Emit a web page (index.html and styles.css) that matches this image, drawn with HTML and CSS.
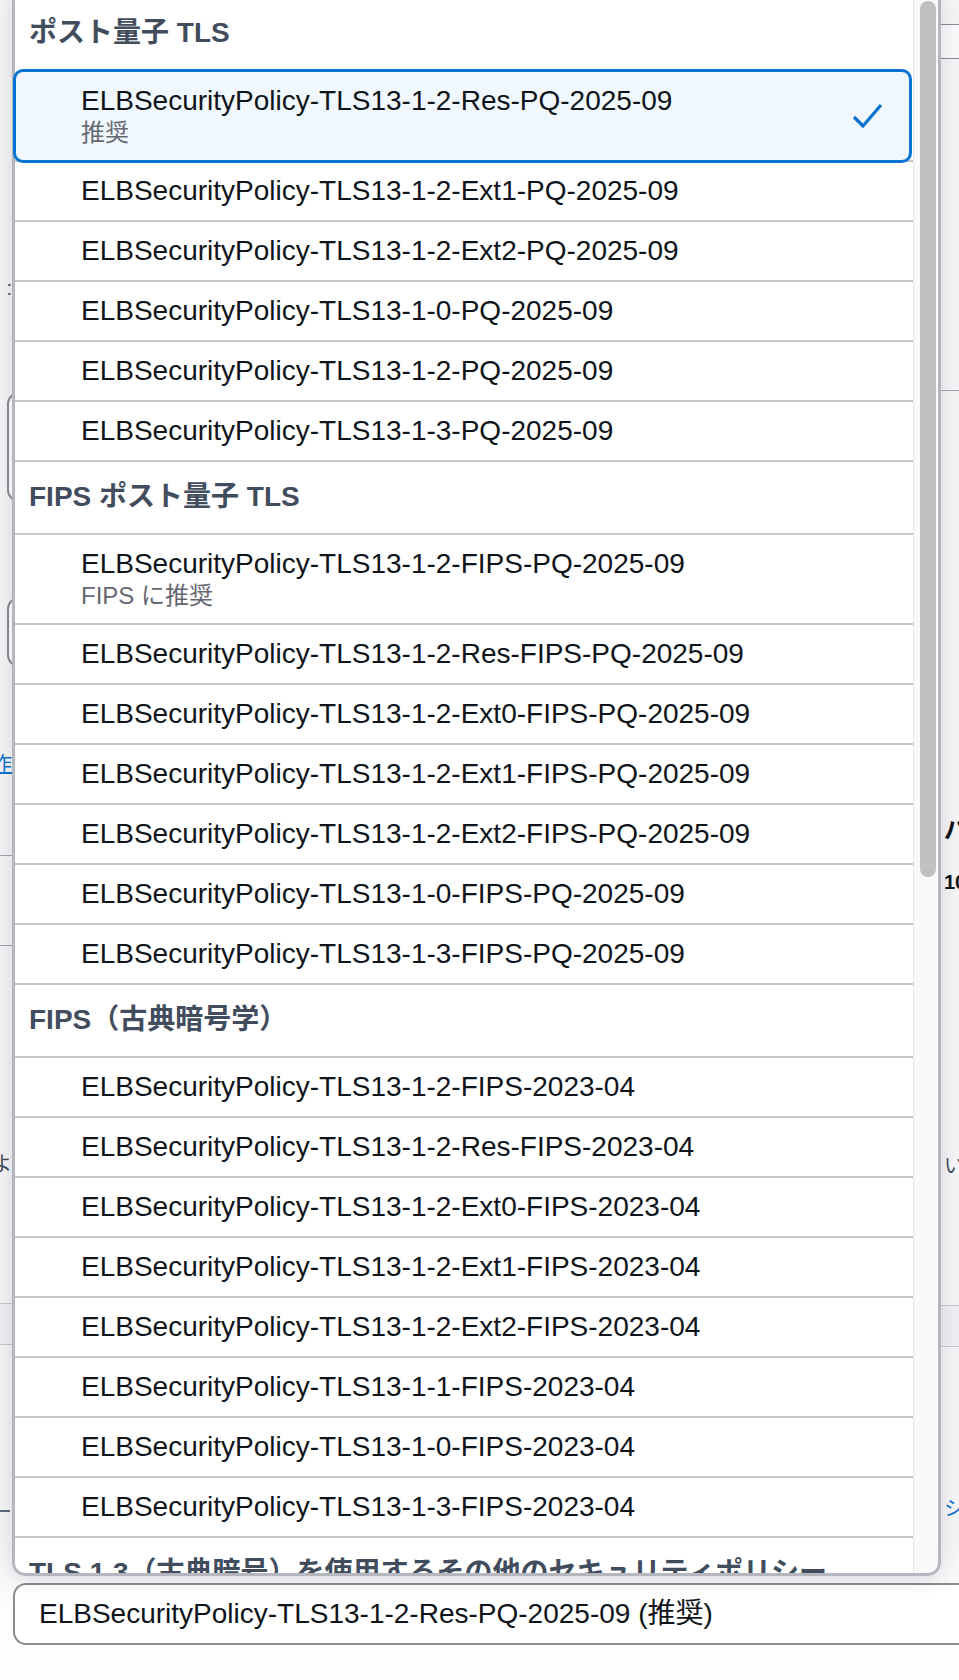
FILE: index.html
```html
<!DOCTYPE html>
<html lang="ja">
<head>
  <meta charset="UTF-8" />
  <meta name="viewport" content="width=device-width, initial-scale=1.0"/>
  <title>セキュリティポリシー</title>
  <link rel="stylesheet" href="styles.css">
</head>
<body>

  <!-- 背景のフォーム (ドロップダウンの下に隠れている部分) -->
  <div class="page">
    <div class="edge edge-left">
      <div class="frag colon">:</div>
      <div class="input-box tall"></div>
      <div class="input-box short"></div>
      <div class="frag link"><span>新規作</span></div>
      <div class="rule rule-a"></div>
      <div class="rule rule-b"></div>
      <div class="frag yo"><span>によ</span></div>
      <div class="band"></div>
      <div class="dash"></div>
    </div>
    <div class="middle"></div>
    <div class="edge edge-right">
      <div class="tab-strip"></div>
      <div class="rule rule-c"></div>
      <div class="frag pa">パラメータ</div>
      <div class="frag num">10</div>
      <div class="frag need">い要件</div>
      <div class="band band-r"></div>
      <div class="frag shi">シークレット</div>
    </div>
  </div>

  <div class="field">
    <div class="select-trigger">ELBSecurityPolicy-TLS13-1-2-Res-PQ-2025-09 (推奨)</div>
  </div>

  <!-- ドロップダウン -->
  <div class="dropdown">
    <div class="options">
      <div class="group-label first">ポスト量子 TLS</div>
      <div class="option selected">
        <div class="option-text">
          <span class="label">ELBSecurityPolicy-TLS13-1-2-Res-PQ-2025-09</span>
          <span class="desc">推奨</span>
        </div>
        <svg class="check" viewBox="0 0 32 28">
          <polyline points="3,15 12,24 30,3" fill="none" stroke="#0972d3" stroke-width="3.2" stroke-linejoin="round"/>
        </svg>
      </div>
      <div class="option">ELBSecurityPolicy-TLS13-1-2-Ext1-PQ-2025-09</div>
      <div class="option">ELBSecurityPolicy-TLS13-1-2-Ext2-PQ-2025-09</div>
      <div class="option">ELBSecurityPolicy-TLS13-1-0-PQ-2025-09</div>
      <div class="option">ELBSecurityPolicy-TLS13-1-2-PQ-2025-09</div>
      <div class="option">ELBSecurityPolicy-TLS13-1-3-PQ-2025-09</div>

      <div class="group-label">FIPS ポスト量子 TLS</div>
      <div class="option">
        <div class="option-text">
          <span class="label">ELBSecurityPolicy-TLS13-1-2-FIPS-PQ-2025-09</span>
          <span class="desc">FIPS に推奨</span>
        </div>
      </div>
      <div class="option">ELBSecurityPolicy-TLS13-1-2-Res-FIPS-PQ-2025-09</div>
      <div class="option">ELBSecurityPolicy-TLS13-1-2-Ext0-FIPS-PQ-2025-09</div>
      <div class="option">ELBSecurityPolicy-TLS13-1-2-Ext1-FIPS-PQ-2025-09</div>
      <div class="option">ELBSecurityPolicy-TLS13-1-2-Ext2-FIPS-PQ-2025-09</div>
      <div class="option">ELBSecurityPolicy-TLS13-1-0-FIPS-PQ-2025-09</div>
      <div class="option">ELBSecurityPolicy-TLS13-1-3-FIPS-PQ-2025-09</div>

      <div class="group-label">FIPS（古典暗号学）</div>
      <div class="option">ELBSecurityPolicy-TLS13-1-2-FIPS-2023-04</div>
      <div class="option">ELBSecurityPolicy-TLS13-1-2-Res-FIPS-2023-04</div>
      <div class="option">ELBSecurityPolicy-TLS13-1-2-Ext0-FIPS-2023-04</div>
      <div class="option">ELBSecurityPolicy-TLS13-1-2-Ext1-FIPS-2023-04</div>
      <div class="option">ELBSecurityPolicy-TLS13-1-2-Ext2-FIPS-2023-04</div>
      <div class="option">ELBSecurityPolicy-TLS13-1-1-FIPS-2023-04</div>
      <div class="option">ELBSecurityPolicy-TLS13-1-0-FIPS-2023-04</div>
      <div class="option">ELBSecurityPolicy-TLS13-1-3-FIPS-2023-04</div>

      <div class="group-label last">TLS 1.3（古典暗号）を使用するその他のセキュリティポリシー</div>
    </div>
    <div class="scrollbar"><div class="thumb"></div></div>
  </div>

</body>
</html>
```

FILE: styles.css
```css
* {
  box-sizing: border-box;
  margin: 0;
  padding: 0;
}

body {
  position: relative;
  height: 1680px;
  overflow: hidden;
  background: linear-gradient(to bottom, #f4f4f7 0, #f4f4f7 1540px, #fdfdfe 1610px);
  font-family: "Liberation Sans", "Noto Sans CJK JP", sans-serif;
  color: #0f141a;
}

/* 背景 */
.page {
  display: flex;
  height: 1578px;
}

.middle {
  flex: 1;
}

.edge {
  overflow: hidden;
  flex: none;
}

.edge-left {
  width: 12px;
}

.edge-right {
  width: 18px;
}

.frag {
  font-size: 20px;
  line-height: 24px;
  height: 24px;
  white-space: nowrap;
  color: #414d5c;
}

.edge-left .frag {
  display: flex;
  justify-content: flex-end;
}

.edge-right .frag {
  padding-left: 3px;
}

.colon {
  margin-top: 276px;
}

.input-box {
  margin-left: 7px;
  width: 80px;
  border: 2px solid #8c8c94;
  border-radius: 12px;
  background: #fff;
}

.input-box.tall {
  margin-top: 92px;
  height: 110px;
}

.input-box.short {
  margin-top: 95px;
  height: 70px;
}

.link {
  margin-top: 85px;
  color: #0972d3;
  text-decoration: underline;
}

.rule {
  border-top: 1px solid #a4a4ac;
}

.rule-a {
  margin-top: 79px;
}

.rule-b {
  margin-top: 89px;
}

.yo {
  margin-top: 206px;
}

.band {
  margin-top: 127px;
  height: 42px;
  background: #eeeef2;
  border-top: 1px solid #c6c6cd;
  border-bottom: 1px solid #c6c6cd;
}

.dash {
  margin-top: 165px;
  width: 10px;
  height: 2px;
  background: #5f6b7a;
}

.tab-strip {
  margin-top: 24px;
  height: 35px;
  background: #f9f9fb;
  border-top: 1px solid #8c8c94;
  border-bottom: 1px solid #8c8c94;
}

.rule-c {
  margin-top: 331px;
}

.pa {
  margin-top: 427px;
  font-weight: bold;
  font-size: 24px;
  height: 26px;
  color: #0f141a;
}

.num {
  margin-top: 26px;
  font-weight: bold;
  color: #0f141a;
}

.need {
  margin-top: 260px;
}

.band-r {
  margin-top: 127px;
}

.shi {
  margin-top: 150px;
  color: #0972d3;
}

/* 選択フィールド */
.field {
  margin-top: 5px;
  padding-left: 13px;
}

.select-trigger {
  height: 62px;
  padding: 0 24px;
  background: #fff;
  border: 2px solid #8c8c94;
  border-right: none;
  border-radius: 13px 0 0 13px;
  font-size: 28px;
  line-height: 58px;
  white-space: nowrap;
}

/* ドロップダウン */
.dropdown {
  position: absolute;
  top: -5px;
  left: 12px;
  width: 929px;
  height: 1581px;
  display: flex;
  padding-top: 3px;
  background: #fff;
  border-radius: 0 0 13px 13px;
  overflow: hidden;
  box-shadow: 0 4px 20px rgba(0, 7, 22, 0.12);
}

.dropdown::after {
  content: "";
  position: absolute;
  top: 0;
  left: 0;
  right: 0;
  bottom: 0;
  border: 3px solid #b6b6be;
  border-radius: 0 0 13px 13px;
  z-index: 1;
  pointer-events: none;
}

.options {
  flex: 1;
  min-width: 0;
}

.group-label {
  border-top: 2px solid #c6c6cd;
  padding: 18px 16px 19px 17px;
  font-size: 28px;
  line-height: 34px;
  font-weight: bold;
  color: #414d5c;
  white-space: nowrap;
}

.group-label.first {
  border-top: none;
}

.group-label.last {
  height: 37px;
  overflow: hidden;
}

.option {
  display: flex;
  align-items: center;
  border-top: 2px solid #c6c6cd;
  padding: 12px 16px 12px 69px;
  font-size: 28px;
  line-height: 34px;
  white-space: nowrap;
}

.option-text .label {
  display: block;
}

.option-text .desc {
  display: block;
  font-size: 24px;
  line-height: 30px;
  color: #656871;
}

.option.selected {
  position: relative;
  z-index: 2;
  margin: 0 1px -3px 1px;
  padding-left: 65px;
  padding-right: 26px;
  border: 3px solid #0972d3;
  border-radius: 10px;
  background: #f0f8fe;
}

.check {
  flex: none;
  width: 32px;
  height: 28px;
  margin-left: auto;
}

.scrollbar {
  flex: none;
  width: 28px;
  padding: 3px 3px 0 6px;
  background: #f9f9f9;
  border-left: 1px solid #e4e4e4;
}

.thumb {
  width: 16px;
  height: 876px;
  border-radius: 8px;
  background: #c1c1c1;
}
```
